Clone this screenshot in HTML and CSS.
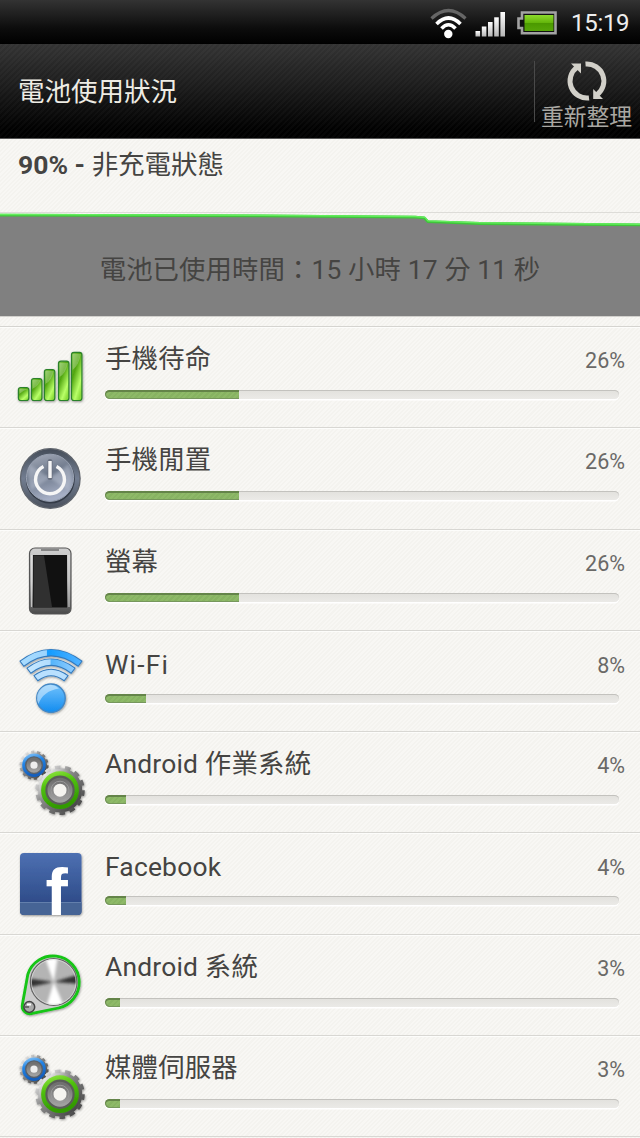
FILE: index.html
```html
<!DOCTYPE html>
<html lang="zh-Hant">
  <head>
    <meta charset="UTF-8" />
    <meta name="viewport" content="width=device-width, initial-scale=1.0" />
    <title>電池使用狀況</title>
    <link rel="stylesheet" href="styles.css">
  </head>
  <body>
    <!-- 狀態列 -->
    <div class="status-bar">
      <svg class="status-icons" width="130" height="44" viewBox="430 0 130 44">
        <defs>
          <linearGradient id="sig" x1="0" y1="0" x2="0" y2="1">
            <stop offset="0" stop-color="#fff" /><stop offset="1" stop-color="#b5b5b5" />
          </linearGradient>
          <linearGradient id="cell" x1="0" y1="0" x2="0" y2="1">
            <stop offset="0" stop-color="#8ddb2b" /><stop offset=".5" stop-color="#62b40a" />
            <stop offset=".52" stop-color="#4b9900" /><stop offset="1" stop-color="#56a608" />
          </linearGradient>
        </defs>
        <g fill="none" stroke-width="3.2">
          <path d="M431.5 18.5Q448.5 2.5 465.5 18.5" stroke="#666" />
          <path d="M436.5 24Q448.5 12 460.5 24" stroke="#fff" stroke-width="3.6" />
          <path d="M441.5 28.5Q448.5 21 455.5 28.5" stroke="#fff" stroke-width="3.6" />
        </g>
        <circle cx="448.3" cy="34" r="4.2" fill="#fff" />
        <g fill="url(#sig)">
          <rect x="475.5" y="31" width="4.6" height="5.5" />
          <rect x="481.8" y="26.5" width="4.6" height="10" />
          <rect x="488" y="22" width="4.6" height="14.5" />
          <rect x="494.2" y="17.3" width="4.6" height="19.2" />
          <rect x="500.4" y="12" width="4.6" height="24.5" />
        </g>
        <path d="M522 12.5H555.5V33.3H522V28H518.5V18.500H522Z" fill="#111" stroke="#a3a3a3" stroke-width="2.6" />
        <rect x="524.5" y="15" width="29" height="16" fill="url(#cell)" />
      </svg>
      <span class="clock">15:19</span>
    </div>

    <!-- 標題列 -->
    <header class="header">
      <h1>電池使用狀況</h1>
      <button class="refresh">
        <svg width="44" height="44" viewBox="0 0 44 44">
          <g fill="none" stroke="#d2d0c9" stroke-width="5">
            <path d="M24 38.900A17 17 0 0 1 12 8.300" />
            <path d="M20.500 5.100A17 17 0 0 1 32 35.700" />
          </g>
          <path d="M6 4.500H16V14.500Z" fill="#d2d0c9" />
          <path d="M38 40H28.200V30Z" fill="#d2d0c9" />
        </svg>
        <span>重新整理</span>
      </button>
    </header>

    <div class="summary"><b>90% - </b>非充電狀態</div>

    <!-- 電量曲線 -->
    <div class="chart">
      <svg width="640" height="104" viewBox="0 212 640 104">
        <path d="M0 215.300L260 216L415 217.500L424 218.300L428 222L480 223.700L640 225.500V316H0Z" fill="#808080" />
        <path d="M0 215.100L260 215.900L415 217.100L424 217.800L428 221.700L480 223.500L640 224.800" fill="none" stroke="#3fc53a" stroke-width="2.8" />
        <path d="M0 214.500L260 215.300L415 216.500L425 217.300L428 220.900L480 222.800L640 224.300" fill="none" stroke="#63ee5d" stroke-width="1.4" />
      </svg>
      <p>電池已使用時間：15 小時 17 分 11 秒</p>
    </div>

    <!-- 共用的漸層與齒輪圖示 -->
    <svg class="defs" width="0" height="0">
      <defs>
        <linearGradient id="green" x1="0" y1="0" x2=".7" y2="1">
          <stop offset="0" stop-color="#87c653" /><stop offset=".4" stop-color="#51a510" />
          <stop offset=".8" stop-color="#b9ff68" /><stop offset="1" stop-color="#8bdc3a" />
        </linearGradient>
        <linearGradient id="steel" x1="0" y1="0" x2="0" y2="1">
          <stop offset="0" stop-color="#454d59" /><stop offset=".5" stop-color="#727d90" /><stop offset="1" stop-color="#4a515d" />
        </linearGradient>
        <linearGradient id="steelFace" x1="0" y1="0" x2=".3" y2="1">
          <stop offset="0" stop-color="#a9afbd" /><stop offset=".5" stop-color="#6c7789" /><stop offset="1" stop-color="#a6afc5" />
        </linearGradient>
        <linearGradient id="phoneCase" x1="0" y1="0" x2="0" y2="1">
          <stop offset="0" stop-color="#d0d0d0" /><stop offset=".5" stop-color="#aaa" /><stop offset="1" stop-color="#4a4a4a" />
        </linearGradient>
        <linearGradient id="gearBody" x1="0" y1="0" x2="1" y2="1">
          <stop offset="0.1" stop-color="#e8e8e8" /><stop offset=".4" stop-color="#8a8a8a" /><stop offset="1" stop-color="#3c3c3c" />
        </linearGradient>
        <linearGradient id="hub" x1="0" y1="0" x2="0" y2="1">
          <stop offset="0" stop-color="#707070" /><stop offset="1" stop-color="#a0a0a0" />
        </linearGradient>
        <linearGradient id="gearGreen" x1="0" y1="0" x2=".3" y2="1">
          <stop offset="0" stop-color="#8be33c" /><stop offset=".4" stop-color="#4fc00c" /><stop offset="1" stop-color="#339a04" />
        </linearGradient>
        <linearGradient id="gearBlue" x1="0" y1="0" x2=".3" y2="1">
          <stop offset="0" stop-color="#84c2f5" /><stop offset=".4" stop-color="#2385e6" /><stop offset="1" stop-color="#155fbd" />
        </linearGradient>
        <linearGradient id="wave" x1="0" y1="0" x2="1" y2="0">
          <stop offset="0" stop-color="#a8dcff" /><stop offset=".42" stop-color="#9bd4ff" />
          <stop offset=".44" stop-color="#129bff" /><stop offset="1" stop-color="#4fb1ff" />
        </linearGradient>
        <linearGradient id="wave2" x1="0" y1="0" x2="1" y2="0">
          <stop offset="0" stop-color="#c6e8ff" /><stop offset=".48" stop-color="#b0dcff" />
          <stop offset=".5" stop-color="#54b4fb" /><stop offset="1" stop-color="#8bcbff" />
        </linearGradient>
        <linearGradient id="ball" x1="0" y1="0" x2="0" y2="1">
          <stop offset="0" stop-color="#71c2fd" /><stop offset="1" stop-color="#128cef" />
        </linearGradient>
        <linearGradient id="fb" x1="0" y1="0" x2="0" y2="1">
          <stop offset="0" stop-color="#4d70b2" /><stop offset="1" stop-color="#27437f" />
        </linearGradient>
        <filter id="soft"><feGaussianBlur stdDeviation="1.8" /></filter>
        <filter id="shadow" x="-20%" y="-20%" width="140%" height="150%">
          <feDropShadow dx=".6" dy="1" stdDeviation="1" flood-opacity=".4" />
        </filter>
        <clipPath id="disc"><circle cx="53.7" cy="47" r="23" /></clipPath>

        <symbol id="gears" viewBox="0 0 90 101">
          <g filter="url(#shadow)">
            <g fill="none" stroke="url(#gearBody)">
              <circle cx="34" cy="33.2" r="10.5" stroke-width="5" />
              <circle cx="34" cy="33.2" r="13.2" stroke-width="2.8" pathLength="28" stroke-dasharray="1.1 .9" />
              <circle cx="60" cy="58.2" r="19" stroke-width="6.5" />
              <circle cx="60" cy="58.2" r="23" stroke-width="3.6" pathLength="28" stroke-dasharray="1.1 .9" />
            </g>
            <circle cx="34" cy="33.2" r="10.4" fill="#59616b" stroke="url(#gearBlue)" stroke-width="2.8" />
            <circle cx="34" cy="33.2" r="5.6" fill="#eee" stroke="url(#hub)" stroke-width="4" />
            <circle cx="60" cy="58.2" r="16.8" fill="#5a5d58" stroke="url(#gearGreen)" stroke-width="4.2" />
            <circle cx="60" cy="58.2" r="9.5" fill="#f5f4f0" stroke="url(#hub)" stroke-width="6" />
            <circle cx="60" cy="58.2" r="9" fill="none" stroke="#999" stroke-width="1" />
          </g>
        </symbol>
      </defs>
    </svg>

    <!-- 用電項目 -->
    <ul class="usage">
      <li>
        <svg class="icon" viewBox="0 0 90 101">
          <g fill="url(#green)" stroke="#2c8229" stroke-width="1.2" filter="url(#shadow)">
            <rect x="18.4" y="60.5" width="10.4" height="13" rx="2.5" />
            <rect x="31.5" y="51.5" width="10.4" height="22" rx="2.5" />
            <rect x="44.4" y="42.5" width="10.4" height="31" rx="2.5" />
            <rect x="58.5" y="34.2" width="10.4" height="39.3" rx="2.5" />
            <rect x="71.5" y="25.3" width="10.4" height="48.2" rx="2.5" />
          </g>
          <path d="M19.5 67V62H27.7Q24 63 19.5 67M32.5 62V53H40.8Q39 58 32.5 62M45.5 57V44H53.7Q52 53 45.5 57M59.6 50V36H67.8Q66 46 59.6 50M72.6 43V27H80.8Q79 38 72.6 43" fill="#fff" opacity=".25" />
        </svg>
        <div class="item">
          <div class="label"><span>手機待命</span><em>26%</em></div>
          <div class="bar"><i style="width: 26%"></i></div>
        </div>
      </li>
      <li>
        <svg class="icon" viewBox="0 0 90 101">
          <circle cx="50.3" cy="50.5" r="29.8" fill="url(#steel)" stroke="#60656d" stroke-width="1.3" />
          <circle cx="50.3" cy="51" r="24.5" fill="#343b47" />
          <circle cx="50" cy="49.8" r="23.6" fill="url(#steelFace)" stroke="#98a1b1" stroke-width="1" />
          <path d="M50 50L30 37Q26 48 31 62ZM50 50L69 36Q75 50 68 62Z" fill="#c3cada" opacity=".45" filter="url(#soft)" />
          <path d="M43.5 38.500A14.400 14.400 0 1 0 56.500 38.500" fill="none" stroke="#f6f6f6" stroke-width="3.4" />
          <path d="M50 33.500V49.500" stroke="#6a7180" stroke-width="5" stroke-linecap="round" />
          <path d="M50 33V50" stroke="#f6f6f6" stroke-width="3.4" />
        </svg>
        <div class="item">
          <div class="label"><span>手機閒置</span><em>26%</em></div>
          <div class="bar"><i style="width: 26%"></i></div>
        </div>
      </li>
      <li>
        <svg class="icon" viewBox="0 0 90 101">
          <rect x="29.5" y="18" width="41.5" height="66" rx="5.5" fill="url(#phoneCase)" stroke="#555" stroke-width="1.2" />
          <path d="M31.5 25V77M69 25V77" stroke="#e8e8e8" stroke-width="1.2" opacity=".7" />
          <path d="M41 20H59" stroke="#555" stroke-width="1.2" />
          <rect x="33" y="25" width="34" height="52.5" fill="#111" />
          <path d="M33.500 25.500H44L52 77H33.500Z" fill="#303030" />
        </svg>
        <div class="item">
          <div class="label"><span>螢幕</span><em>26%</em></div>
          <div class="bar"><i style="width: 26%"></i></div>
        </div>
      </li>
      <li class="latin">
        <svg class="icon" viewBox="0 0 90 101">
          <g fill="none" filter="url(#shadow)">
            <g stroke="#3279bd" stroke-width="7.4">
              <path d="M21.500 33Q51 10.500 80.500 33" />
              <path d="M28.500 40Q51 22.500 73.500 40" />
              <path d="M35.500 47.500Q51 35.500 66.500 47.500" />
            </g>
            <g stroke-width="5.4">
              <path d="M22.300 32.400Q51 10.700 79.700 32.400" stroke="url(#wave)" />
              <path d="M29.300 39.400Q51 22.700 72.700 39.400" stroke="url(#wave2)" />
              <path d="M36.300 46.900Q51 36 65.700 46.900" stroke="#b9e0fe" />
            </g>
          </g>
          <circle cx="51" cy="67.3" r="14.2" fill="url(#ball)" stroke="#4387c5" stroke-width="1.5" filter="url(#shadow)" />
          <path d="M38.500 73A13 13 0 0 1 59 57.500Q43 60 38.500 73Z" fill="#fff" opacity=".45" />
        </svg>
        <div class="item">
          <div class="label"><span class="wide">Wi-Fi</span><em>8%</em></div>
          <div class="bar"><i style="width: 8%"></i></div>
        </div>
      </li>
      <li>
        <svg class="icon"><use href="#gears" /></svg>
        <div class="item">
          <div class="label"><span>Android 作業系統</span><em>4%</em></div>
          <div class="bar"><i style="width: 4%"></i></div>
        </div>
      </li>
      <li class="latin">
        <svg class="icon" viewBox="0 0 90 101">
          <rect x="20" y="20" width="61.5" height="62" rx="4" fill="url(#fb)" filter="url(#shadow)" />
          <path d="M20 69.500H81.500V78Q81.500 82 77.500 82H24Q20 82 20 78Z" fill="#466495" />
          <path d="M20 69.500H81.500" stroke="#637fac" />
          <text class="fb-letter" x="45.5" y="81.5">f</text>
        </svg>
        <div class="item">
          <div class="label"><span>Facebook</span><em>4%</em></div>
          <div class="bar"><i style="width: 4%"></i></div>
        </div>
      </li>
      <li>
        <svg class="icon" viewBox="0 0 90 101">
          <path d="M27.800 39.500A26.300 26.300 0 1 1 58.500 73L31 78.600A7.500 7.500 0 0 1 22.300 70Z" fill="#ccc" stroke="#12c512" stroke-width="2.8" filter="url(#shadow)" />
          <circle cx="53.700" cy="47" r="24" fill="#666" />
          <g clip-path="url(#disc)">
            <circle cx="53.700" cy="47" r="23" fill="#b4b4b4" />
            <g filter="url(#soft)">
              <path d="M53.700 47L44 20H58ZM53.700 47L45 76H66Z" fill="#fff" />
              <path d="M53.700 47L26 43V53ZM53.700 47L80 39V49Z" fill="#333" />
            </g>
          </g>
          <circle cx="53.700" cy="47" r="22.300" fill="none" stroke="#ddd" stroke-width="1" opacity=".7" />
          <circle cx="29.300" cy="72" r="5.400" fill="#aaa" stroke="#444" stroke-width="1.500" />
          <path d="M25 72H29" stroke="#555" stroke-width="1.500" />
          <path d="M27 69.500H31" stroke="#fff" stroke-width="2" />
        </svg>
        <div class="item">
          <div class="label"><span>Android 系統</span><em>3%</em></div>
          <div class="bar"><i style="width: 3%"></i></div>
        </div>
      </li>
      <li>
        <svg class="icon"><use href="#gears" /></svg>
        <div class="item">
          <div class="label"><span>媒體伺服器</span><em>3%</em></div>
          <div class="bar"><i style="width: 3%"></i></div>
        </div>
      </li>
    </ul>
  </body>
</html>
```
FILE: styles.css
```css
* {
  box-sizing: border-box;
}

body {
  margin: 0;
  width: 640px;
  height: 1138px;
  overflow: hidden;
  background: repeating-linear-gradient(135deg, #f8f7f4 0 1.5px, #f4f3ef 1.5px 3px);
  color: #454442;
  font-family: Roboto, "Noto Sans CJK TC", sans-serif;
  font-size: 26.4px;
}

/* 狀態列 */
.status-bar {
  height: 44px;
  padding-right: 11px;
  display: flex;
  justify-content: flex-end;
  gap: 11px;
  background: linear-gradient(#333, #0c0c0c 65%, #000);
}

.clock {
  width: 58px;
  line-height: 46px;
  font-size: 24px;
  letter-spacing: -0.3px;
  color: #eee;
}

/* 標題列 */
.header {
  height: 95px;
  padding: 0 5px 0 18px;
  display: flex;
  justify-content: space-between;
  align-items: center;
  border-bottom: 1px solid #555;
  background:
    repeating-linear-gradient(135deg, rgba(255, 255, 255, 0.025) 0 2px, transparent 2px 4px),
    linear-gradient(#333, #1c1c1c 45%, #000 92%);
}

.header h1 {
  margin: 0;
  padding-bottom: 4px;
  font-size: 26.5px;
  font-weight: 400;
  color: #eeece4;
}

.refresh {
  height: 61px;
  width: 101px;
  padding: 0;
  display: flex;
  flex-direction: column;
  align-items: center;
  border: 0;
  border-left: 1px solid #4a4a4a;
  background: none;
  color: #aaa8a3;
  font-family: inherit;
  font-size: 22.8px;
}

.refresh svg {
  margin: -2px 0 -2px 3px;
  flex: none;
}

.refresh span {
  line-height: 34px;
  padding-left: 3px;
}

.summary {
  height: 73px;
  padding: 0 18px;
  line-height: 51px;
  font-size: 26.5px;
  white-space: pre;
}

/* 電量曲線 */
.chart {
  height: 105px;
  display: grid;
  border-bottom: 1px solid #d2d1cd;
  box-shadow: inset 0 1px #dddcd8;
}

.chart svg,
.chart p {
  grid-area: 1 / 1;
}

.chart p {
  margin: 0;
  padding-top: 6px;
  text-align: center;
  line-height: 105px;
  letter-spacing: 0.1px;
}

.defs {
  display: block;
}

/* 用電項目 */
.usage {
  margin: 9px 0 0;
  padding: 0;
  list-style: none;
  border-top: 1px solid #d5d4d0;
}

.usage li {
  height: 101.25px;
  display: flex;
  gap: 15px;
  border-bottom: 1px solid #d8d7d3;
  box-shadow: inset 0 1px #fdfdfb;
}

.icon {
  width: 90px;
  height: 101px;
  flex: none;
}

.fb-letter {
  font: bold 67px "Liberation Sans", sans-serif;
  fill: #fff;
}

.item {
  width: 514px;
}

.label {
  height: 63px;
  margin-right: -6px;
  display: flex;
  justify-content: space-between;
  line-height: 65px;
  letter-spacing: 0.2px;
}

.label .wide {
  letter-spacing: 1.2px;
}

.label em {
  padding-top: 1px;
  font-size: 21.5px;
  font-style: normal;
  letter-spacing: 0;
  color: #6a6967;
}

.latin .label {
  line-height: 68px;
}

.bar {
  height: 9px;
  overflow: hidden;
  border-radius: 4.5px;
  background: linear-gradient(#e2e1dd, #ebeae7);
  box-shadow: inset 0 1px #c3c2be, 0 1.5px #fff;
}

.bar i {
  display: block;
  height: 9px;
  border-radius: 4.5px 0 0 4.5px;
  background: repeating-linear-gradient(135deg, #8eb968 0 2px, #87b362 2px 4px);
  box-shadow: inset 0 2px #648449, inset 1px -1px #77975d;
}
```
